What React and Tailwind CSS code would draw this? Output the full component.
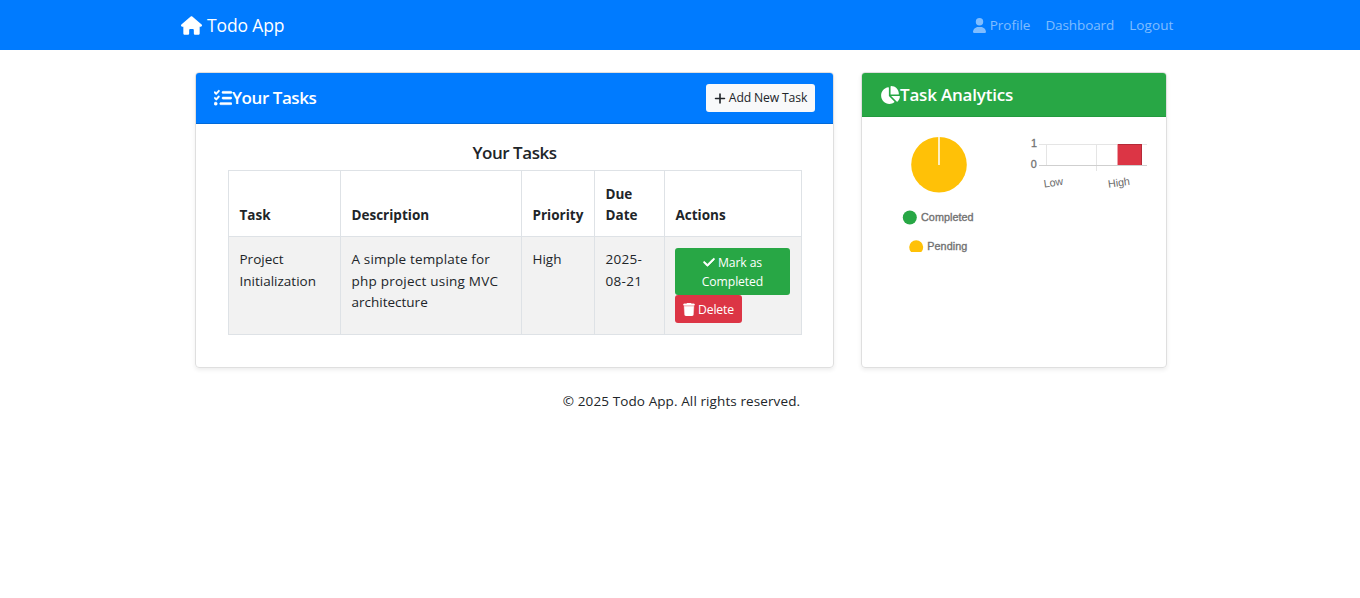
import React from "react";
import { FaHouse, FaUser, FaListCheck, FaPlus, FaCheck, FaTrash, FaChartPie } from "react-icons/fa6";

function Navbar() {
  return (
    <nav className="flex h-[50px] items-center justify-between bg-[#007bff] pl-[181px] pr-[186.5px]">
      <a className="flex items-center text-[17.5px] text-white">
        <FaHouse className="h-[19px] w-[21px]" />
        <span className="ml-[5px] tracking-[-0.13px]">Todo App</span>
      </a>
      <div className="flex items-center gap-[15px] text-[13.5px] text-white/50">
        <a className="flex items-center">
          <FaUser className="h-[15px] w-[13px]" />
          <span className="ml-[4px]">Profile</span>
        </a>
        <a className="tracking-[-0.1px]">Dashboard</a>
        <a className="tracking-[0.1px]">Logout</a>
      </div>
    </nav>
  );
}

function TaskTable() {
  const th = "border border-[#dee2e6] pl-[10.5px] pr-[9px] pb-[9px] text-left align-bottom font-bold";
  const td = "border border-[#dee2e6] pl-[10.5px] pr-[9px] pt-[12px] align-top";
  return (
    <table className="w-[574px] table-fixed border-collapse text-[13.5px] leading-[21.6px]">
      <colgroup>
        <col className="w-[112px]" />
        <col className="w-[181px]" />
        <col className="w-[73px]" />
        <col className="w-[70px]" />
        <col className="w-[137px]" />
      </colgroup>
      <thead>
        <tr className="h-[66px]">
          <th className={th}>Task</th>
          <th className={th}>Description</th>
          <th className={th}>Priority</th>
          <th className={th}>Due<br />Date</th>
          <th className={th}>Actions</th>
        </tr>
      </thead>
      <tbody>
        <tr className="h-[98px] bg-[#f2f2f2]">
          <td className={td}>Project<br />Initialization</td>
          <td className={td}>
            <span className="tracking-[0.15px]">A simple template for<br /></span>
            <span className="tracking-[0.23px]">php project using MVC<br /></span>
            architecture
          </td>
          <td className={td}>High</td>
          <td className={td}><span className="tracking-[0.3px]">2025-<br />08-21</span></td>
          <td className="border border-[#dee2e6] px-[10px] pt-[11px] align-top">
            <button className="block h-[47px] w-[115px] rounded-[3px] bg-[#28a745] text-[12.2px] leading-[19px] text-white">
              <span className="flex items-center justify-center">
                <FaCheck className="mr-[3px] h-[12.6px] w-[12px] stroke-current stroke-[30]" />
                <span className="tracking-[-0.1px]">Mark as</span>
              </span>
              <span className="block tracking-[-0.1px]">Completed</span>
            </button>
            <button className="flex h-[28px] w-[67px] items-center justify-center rounded-[3px] bg-[#dc3545] pt-px text-[12.2px] text-white">
              <FaTrash className="mr-[3px] h-[13px] w-[12px] stroke-current stroke-[15]" />
              <span className="tracking-[-0.1px]">Delete</span>
            </button>
          </td>
        </tr>
      </tbody>
    </table>
  );
}

function Charts() {
  return (
    <svg className="block h-[130px] w-[284px]" viewBox="872 130 284 130" fontFamily="'Liberation Sans', sans-serif" fontSize="10.8" fill="#6b6b6b">
      <circle cx="939" cy="164.7" r="27.8" fill="#ffc107" />
      <path d="M939 137V165" stroke="#fff" strokeOpacity="0.75" strokeWidth="2" />
      <circle cx="909.8" cy="217.5" r="7" fill="#28a745" />
      <text x="921" y="220.5" textLength="52.5" stroke="#777" strokeWidth="0.35">Completed</text>
      <path d="M911.1 252A7 7 0 1 1 921.3 252Z" fill="#ffc107" />
      <text x="927.3" y="250" textLength="40" stroke="#777" strokeWidth="0.35">Pending</text>
      <g fill="none" strokeWidth="1">
        <path d="M1039 144.5H1147M1046.5 144V166M1096.5 144V171" stroke="#e5e5e5" />
        <path d="M1039 165.5H1147" stroke="#cfcfcf" />
      </g>
      <rect x="1118" y="144" width="24" height="21" fill="#dc3545" />
      <path d="M1118 144.5H1141.5V165" fill="none" stroke="#b52a38" />
      <path d="M1117.5 144V165" stroke="#eda0a7" />
      <text x="1031" y="147.3" stroke="#777" strokeWidth="0.3">1</text>
      <text x="1030.7" y="168" stroke="#777" strokeWidth="0.3">0</text>
      <text transform="translate(1044.3 187.5) rotate(-8)" textLength="19.5">Low</text>
      <text transform="translate(1108.5 187.8) rotate(-8)" textLength="22">High</text>
    </svg>
  );
}

export default function App() {
  return (
    <div className="h-[598px] w-[1360px] overflow-hidden bg-white font-['Open_Sans','Noto_Sans',sans-serif] text-[#212529]">
      <Navbar />
      <main className="flex gap-[27px] pl-[195px] pt-[22px]">
        <section className="h-[296px] w-[639px] overflow-hidden rounded-[4px] border border-[#dfdfdf] shadow-[0_2px_4px_rgba(0,0,0,0.075)]">
          <header className="flex h-[51px] items-center justify-between border-b border-[#0069d9] bg-[#007bff] pl-[18px] pr-[18px] text-white">
            <h5 className="flex items-center text-[17px] font-semibold">
              <FaListCheck className="h-[18px] w-[18px] stroke-current stroke-[10]" />
              <span className="tracking-[-0.45px]">Your Tasks</span>
            </h5>
            <button className="flex h-[28px] w-[109px] items-center justify-center rounded-[3px] bg-[#f8f9fa] text-[12.2px] text-[#212529]">
              <FaPlus className="mr-[3px] h-[13px] w-[12px]" />
              <span className="tracking-[-0.15px]">Add New Task</span>
            </button>
          </header>
          <div className="pl-[32px] pt-[18px]">
            <h5 className="mb-[6px] w-[573px] text-center text-[17px] font-semibold leading-[22px] tracking-[-0.45px]">Your Tasks</h5>
            <TaskTable />
          </div>
        </section>
        <section className="h-[296px] w-[306px] overflow-hidden rounded-[4px] border border-[#dfdfdf] shadow-[0_2px_4px_rgba(0,0,0,0.075)]">
          <header className="flex h-[44px] items-center border-b border-[#239a3e] bg-[#28a745] pl-[18px] text-white">
            <h5 className="flex items-center text-[17px] font-semibold">
              <FaChartPie className="h-[20px] w-[20px]" />
              <span className="tracking-[-0.2px]">Task Analytics</span>
            </h5>
          </header>
          <div className="pl-[10px] pt-[13px]">
            <Charts />
          </div>
        </section>
      </main>
      <footer className="pl-[3px] pt-[22px] text-center text-[13.5px] leading-[22px] tracking-[0.1px]">© 2025 Todo App. All rights reserved.</footer>
    </div>
  );
}
